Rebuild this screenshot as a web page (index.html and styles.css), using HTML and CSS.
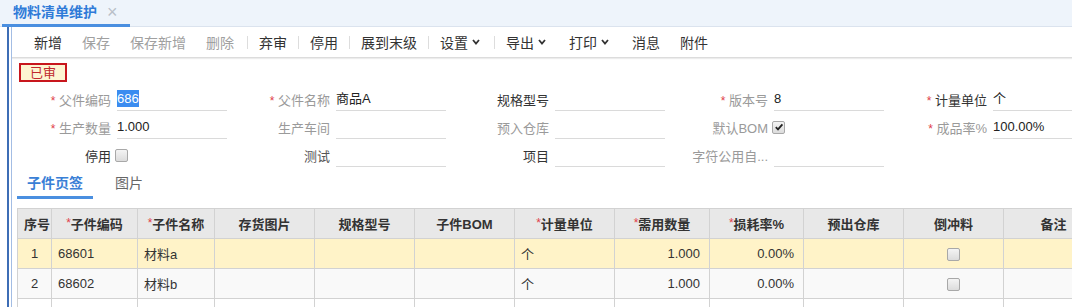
FILE: index.html
```html
<!DOCTYPE html>
<html lang="zh-CN">
<head>
    <meta charset="UTF-8">
    <meta name="viewport" content="width=device-width, initial-scale=1.0">
    <title>物料清单维护</title>
    <link rel="stylesheet" href="styles.css">
</head>
<body>
    <div class="tabbar">
        <div class="tab">物料清单维护<span class="close">×</span></div>
    </div>
    <div class="frame">
        <div class="inner">
            <div class="toolbar">
                <span class="btn">新增</span>
                <span class="btn off">保存</span>
                <span class="btn off">保存新增</span>
                <span class="btn off">删除</span>
                <span class="sep first"></span>
                <span class="btn">弃审</span>
                <span class="sep"></span>
                <span class="btn">停用</span>
                <span class="sep"></span>
                <span class="btn">展到末级</span>
                <span class="sep"></span>
                <span class="btn drop">设置<svg width="8" height="6" viewBox="0 0 8 6"><polyline points="1,1 4,4.5 7,1" fill="none" stroke="#333" stroke-width="1.8"/></svg></span>
                <span class="sep"></span>
                <span class="btn drop">导出<svg width="8" height="6" viewBox="0 0 8 6"><polyline points="1,1 4,4.5 7,1" fill="none" stroke="#333" stroke-width="1.8"/></svg></span>
                <span class="btn drop">打印<svg width="8" height="6" viewBox="0 0 8 6"><polyline points="1,1 4,4.5 7,1" fill="none" stroke="#333" stroke-width="1.8"/></svg></span>
                <span class="btn">消息</span>
                <span class="btn">附件</span>
            </div>

            <div class="content">
                <div class="status">已审</div>

                <div class="form">
                    <!-- 第一行 -->
                    <div class="field"><label class="lbl muted"><i>*</i> 父件编码</label><div class="input"><span class="sel">686</span></div></div>
                    <div class="field"><label class="lbl muted"><i>*</i> 父件名称</label><div class="input">商品A</div></div>
                    <div class="field"><label class="lbl">规格型号</label><div class="input"></div></div>
                    <div class="field"><label class="lbl muted"><i>*</i> 版本号</label><div class="input">8</div></div>
                    <div class="field"><label class="lbl"><i>*</i> 计量单位</label><div class="input">个</div></div>
                    <!-- 第二行 -->
                    <div class="field"><label class="lbl muted"><i>*</i> 生产数量</label><div class="input">1.000</div></div>
                    <div class="field"><label class="lbl muted">生产车间</label><div class="input"></div></div>
                    <div class="field"><label class="lbl muted">预入仓库</label><div class="input"></div></div>
                    <div class="field"><label class="lbl muted">默认BOM</label><span class="chk on"><svg width="10" height="10" viewBox="0 0 10 10"><polyline points="1.8,5.2 4,7.4 8.4,2.4" fill="none" stroke="#222" stroke-width="1.8"/></svg></span></div>
                    <div class="field"><label class="lbl muted"><i>*</i> 成品率%</label><div class="input">100.00%</div></div>
                    <!-- 第三行 -->
                    <div class="field"><label class="lbl">停用</label><span class="chk"></span></div>
                    <div class="field"><label class="lbl dim">测试</label><div class="input"></div></div>
                    <div class="field"><label class="lbl">项目</label><div class="input"></div></div>
                    <div class="field"><label class="lbl muted">字符公用自...</label><div class="input"></div></div>
                </div>

                <div class="subtabs">
                    <span class="stab active">子件页签</span>
                    <span class="stab">图片</span>
                </div>

                <table class="grid">
                    <colgroup>
                        <col style="width:34px"><col style="width:86px"><col style="width:77px"><col style="width:100px">
                        <col style="width:100px"><col style="width:100px"><col style="width:100px"><col style="width:95px">
                        <col style="width:94px"><col style="width:100px"><col style="width:100px"><col style="width:100px">
                    </colgroup>
                    <thead>
                        <tr>
                            <th>序号</th>
                            <th><i>*</i>子件编码</th>
                            <th><i>*</i>子件名称</th>
                            <th>存货图片</th>
                            <th>规格型号</th>
                            <th>子件BOM</th>
                            <th><i>*</i>计量单位</th>
                            <th><i>*</i>需用数量</th>
                            <th><i>*</i>损耗率%</th>
                            <th>预出仓库</th>
                            <th>倒冲料</th>
                            <th>备注</th>
                        </tr>
                    </thead>
                    <tbody>
                        <tr class="cur">
                            <td class="c">1</td><td>68601</td><td>材料a</td><td></td><td></td><td></td>
                            <td>个</td><td class="r">1.000</td><td class="r">0.00%</td><td></td>
                            <td class="c"><span class="chk"></span></td><td></td>
                        </tr>
                        <tr class="alt">
                            <td class="c">2</td><td>68602</td><td>材料b</td><td></td><td></td><td></td>
                            <td>个</td><td class="r">1.000</td><td class="r">0.00%</td><td></td>
                            <td class="c"><span class="chk"></span></td><td></td>
                        </tr>
                        <tr>
                            <td></td><td></td><td></td><td></td><td></td><td></td>
                            <td></td><td></td><td></td><td></td><td></td><td></td>
                        </tr>
                    </tbody>
                </table>
            </div>
        </div>
    </div>
</body>
</html>
```

FILE: styles.css
```css
html, body{
    margin: 0;
    padding: 0;
    overflow: hidden;
    background: #ffffff;
    font-family: "Liberation Sans", "Noto Sans CJK SC", sans-serif;
    color: #333333;
}
i{
    font-style: normal;
    color: #e0404a;
}
/* 顶部页签 */
.tabbar{
    height: 27px;
    box-sizing: border-box;
    background: #eef4fb;
    border-bottom: 1px solid #dbe3ee;
    display: flex
}
.tab{
    margin-left: 2px;
    height: 27px;
    box-sizing: border-box;
    padding: 0 12px 0 11px;
    border-bottom: 3px solid #4a8fe0;
    font-size: 14px;
    font-weight: bold;
    line-height: 24px;
    color: #2f7bd8;
    display: flex;
    align-items: center
}
.tab .close{
    margin-left: 10px;
    font-weight: normal;
    font-size: 18px;
    color: #b9bfc8
}
/* 左侧双线 */
.frame{
    margin-left: 7px;
    border-left: 2px solid #3d6db5;
    padding-left: 2px;
    height: 280px;
    overflow: hidden
}
.inner{
    border-left: 1px solid #a3bde4;
    height: 100%;
    overflow: hidden
}
/* 工具栏 */
.toolbar{
    height: 30px;
    padding-left: 12px;
    display: flex;
    align-items: center;
    border-bottom: 1px solid #dcdcdc;
    box-shadow: 0 1px 1px #ececec;
    font-size: 14px
}
.btn{
    padding: 0 10px;
    color: #333333;
    display: inline-flex;
    align-items: center;
    white-space: nowrap
}
.btn.off{
    color: #a0a0a0
}
.btn.drop svg{
    margin-left: 4px;
    margin-right: 3px
}
.sep{
    width: 1px;
    height: 13px;
    margin: 0 1px;
    background: #dddddd
}
.sep.first{
    margin-left: 3px
}
/* 内容 */
.content{
    padding-top: 5px
}
.status{
    margin-left: 7px;
    width: 48px;
    height: 19px;
    box-sizing: border-box;
    border: 2px solid #c8161d;
    background: #fdf5d2;
    color: #c0282e;
    font-size: 13px;
    line-height: 15px;
    text-align: center
}
.form{
    margin-top: 3px;
    display: grid;
    grid-template-columns: repeat(5, 219px);
    grid-auto-rows: 28px
}
.field{
    display: flex;
    align-items: center
}
.lbl{
    width: 99px;
    margin-right: 6px;
    text-align: right;
    font-size: 13px;
    color: #333333;
    white-space: nowrap
}
.lbl.muted{
    color: #9a9a9a
}
.lbl.dim{
    color: #555555
}
.lbl i{
    font-size: 12px
}
.input{
    width: 110px;
    height: 24px;
    box-sizing: border-box;
    border-bottom: 1px solid #dadada;
    font-size: 13px;
    line-height: 23px;
    color: #222222
}
.sel{
    background: #3b8cf0;
    color: #ffffff;
    padding: 1px 0
}
.chk{
    width: 11px;
    height: 11px;
    border: 1px solid #a8a8a8;
    border-radius: 2px;
    background: linear-gradient(#f4f4f4, #dcdcdc);
    display: inline-flex;
    align-items: center;
    justify-content: center;
    vertical-align: middle
}
.field .chk{
    margin-left: -2px
}
/* 子页签 */
.subtabs{
    margin: 2px 0 0 5px;
    height: 28px;
    display: flex
}
.stab{
    height: 28px;
    box-sizing: border-box;
    padding: 0 10px;
    margin-right: 12px;
    font-size: 14px;
    line-height: 25px;
    color: #666666
}
.stab.active{
    border-bottom: 3px solid #4a8fe0;
    color: #3a7fd6;
    font-weight: bold
}
/* 表格 */
.grid{
    margin: 9px 0 0 5px;
    border-collapse: collapse;
    table-layout: fixed;
    width: 1086px;
    font-size: 13px
}
.grid th, .grid td{
    border: 1px solid #d2d2d2;
    height: 30px;
    padding: 0 6px;
    box-sizing: border-box;
    white-space: nowrap;
    overflow: hidden
}
.grid th{
    background: #e8e8e8;
    font-weight: bold;
    color: #333333;
    text-align: center
}
.grid th i{
    font-weight: normal;
    font-size: 12px;
    vertical-align: 2px
}
.grid td{
    color: #333333
}
.grid td.c{
    text-align: center
}
.grid td.r{
    text-align: right;
    padding-right: 9px
}
.grid tr.cur td{
    background: #fff3c8
}
.grid tr.alt td{
    background: #f9f9f9
}
```
